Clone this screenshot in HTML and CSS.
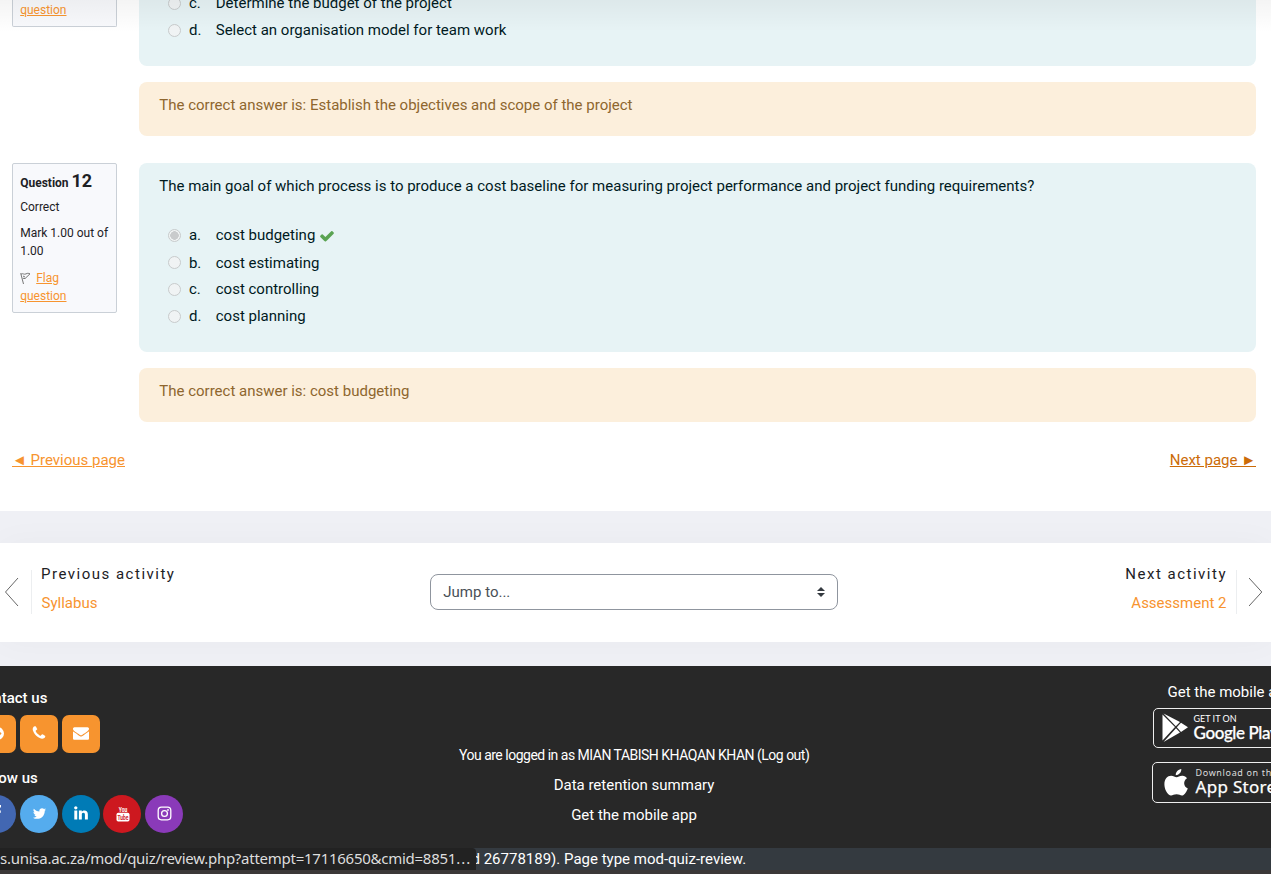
FILE: index.html
```html
<!DOCTYPE html>
<html lang="en">
<head>
<meta charset="utf-8">
<title>Quiz review</title>
<link rel="stylesheet" href="styles.css">
</head>
<body>
<main class="quiz">
  <section class="question question-first">
    <aside class="info"><a href="#">question</a></aside>
    <div class="content">
      <div class="formulation">
        <div class="option opt-c"><span class="radio"></span><span class="letter">c.</span><span>Determine the budget of the project</span></div>
        <div class="option"><span class="radio"></span><span class="letter">d.</span><span>Select an organisation model for team work</span></div>
      </div>
      <div class="outcome">The correct answer is: Establish the objectives and scope of the project</div>
    </div>
  </section>
  <section class="question">
    <aside class="info">
      <h3>Question <span>12</span></h3>
      <p>Correct</p>
      <p class="mark">Mark 1.00 out of 1.00</p>
      <div class="flag"><svg width="11" height="13" viewBox="0 0 11 13" fill="none" stroke="#777"><path d="M.7 1.2 3.5 12M1 2.2C3 .8 4 3 6 1.9S8.500 1.500 10 1.800L5 6.600 2.800 6.200M3 4l2 1"/></svg><a href="#">Flag<br>question</a></div>
    </aside>
    <div class="content">
      <div class="formulation full">
        <p class="prompt">The main goal of which process is to produce a cost baseline for measuring project performance and project funding requirements?</p>
        <div class="option first"><span class="radio checked"></span><span class="letter">a.</span><span>cost budgeting</span><svg class="tick" width="16" height="16" viewBox="0 0 1792 1792"><path fill="#5aa352" d="M1671 566q0 40-28 68l-724 724-136 136q-28 28-68 28t-68-28l-136-136-362-362q-28-28-28-68t28-68l136-136q28-28 68-28t68 28l294 295 656-657q28-28 68-28t68 28l136 136q28 28 28 68z"/></svg></div>
        <div class="option"><span class="radio"></span><span class="letter">b.</span><span>cost estimating</span></div>
        <div class="option"><span class="radio"></span><span class="letter">c.</span><span>cost controlling</span></div>
        <div class="option"><span class="radio"></span><span class="letter">d.</span><span>cost planning</span></div>
      </div>
      <div class="outcome">The correct answer is: cost budgeting</div>
    </div>
  </section>
  <nav class="pager"><a href="#">◄ Previous page</a><a class="hovered" href="#">Next page ►</a></nav>
</main>
<nav class="activities">
  <svg class="chevron" width="14" height="30" viewBox="0 0 14 30"><path d="M13 1 .5 15 13 29"/></svg>
  <div class="activity prev"><span class="label">Previous activity</span><a href="#">Syllabus</a></div>
  <div class="jump"><span>Jump to...</span><svg width="8" height="10" viewBox="0 0 4 5"><path fill="#343a40" d="M2 0 0 2h4zm0 5L0 3h4z"/></svg></div>
  <div class="activity next"><span class="label">Next activity</span><a href="#">Assessment 2</a></div>
  <svg class="chevron right" width="14" height="30" viewBox="0 0 14 30"><path d="M0 1l12.800 14L0 29"/></svg>
</nav>
<footer class="footer">
  <div class="social">
    <h4 class="contact">Contact us</h4>
    <div class="icons">
      <span class="tile"><svg width="15" height="15" viewBox="0 0 15 15"><circle cx="7.500" cy="7.500" r="6.500" fill="#fff"/><path d="M4 4l3-1 1 3-3 2zM9.500 7.500l1.200-1.500.8 1.500-1 1.500z" fill="#f7942f"/></svg></span>
      <span class="tile"><svg width="16" height="16" viewBox="0 0 1792 1792"><path fill="#fff" d="M1600 1240q0 27-10 70.500t-21 68.500q-21 50-122 106-94 51-186 51-27 0-52.500-3.500t-57.500-12.500-47.500-14.500-55.500-20.500-49-18q-98-35-175-83-128-79-264.500-215.500t-215.500-264.500q-48-77-83-175-3-9-18-49t-20.500-55.500-14.500-47.500-12.500-57.500-3.500-52.500q0-92 51-186 56-101 106-122 25-11 68.500-21t70.500-10q14 0 21 3 18 6 53 76 11 19 30 54t35 63.500 31 53.500q3 4 17.500 25t21.500 35.500 7 28.500q0 20-28.500 50t-62 55-62 53-28.500 46q0 9 5 22.500t8.500 20.500 14 24 11.500 19q76 137 174 235t235 174q2 1 19 11.500t24 14 20.500 8.500 22.500 5q18 0 46-28.500t53-62 55-62 50-28.500q14 0 28.500 7t35.500 21.500 25 17.500q25 15 53.500 31t63.500 35 54 30q70 35 76 53 3 7 3 21z"/></svg></span>
      <span class="tile mail"><svg width="16" height="16" viewBox="0 0 1792 1792"><path fill="#fff" d="M1792 710v794q0 66-47 113t-113 47h-1472q-66 0-113-47t-47-113v-794q44 49 101 87 362 246 497 345 57 42 92.500 65.500t94.500 48 110 24.500h2q51 0 110-24.500t94.500-48 92.500-65.500q170-123 498-345 57-39 100-87zm0-294q0 79-49 151t-122 123q-376 261-468 325-10 7-42.500 31t-54 38.500-52 32.500-57.500 27-50 9h-2q-23 0-50-9t-57.500-27-52-32.500-54-38.500-42.500-31q-91-64-262-182.500t-205-142.500q-62-42-117-115.500t-55-136.500q0-78 41.500-130t118.500-52h1472q65 0 112.500 47t47.500 113z"/></svg></span>
    </div>
    <h4 class="follow">Follow us</h4>
    <div class="icons">
      <span class="tile round fb"><svg width="16" height="16" viewBox="0 0 1792 1792"><path fill="#fff" d="M1343 12v264h-157q-86 0-116 36t-30 108v189h293l-39 296h-254v759h-306v-759h-255v-296h255v-218q0-186 104-288.500t277-102.500q147 0 228 12z"/></svg></span>
      <span class="tile round tw"><svg width="15" height="15" viewBox="0 0 1792 1792"><path fill="#fff" d="M1684 408q-67 98-162 167 1 14 1 42 0 130-38 259.500t-115.500 248.500-184.500 210.500-258 146-323 54.500q-271 0-496-145 35 4 78 4 225 0 401-138-105-2-188-64.500t-114-159.500q33 5 61 5 43 0 85-11-112-23-185.500-111.500t-73.500-205.500v-4q68 38 146 41-66-44-105-115t-39-154q0-88 44-163 121 149 294.500 238.500t371.500 99.500q-8-38-8-74 0-134 94.500-228.500t228.500-94.500q140 0 236 102 109-21 205-78-37 115-142 178 93-10 186-50z"/></svg></span>
      <span class="tile round li"><svg width="16" height="16" viewBox="0 0 1792 1792"><path fill="#fff" d="M477 625v991h-330v-991h330zm21-306q1 73-50.500 122t-135.500 49h-2q-82 0-132-49t-50-122q0-74 51.500-122.500t134.500-48.500 133 48.500 51 122.500zm1166 729v568h-329v-530q0-105-40.500-164.500t-126.500-59.500q-63 0-105.500 34.500t-63.500 85.500q-11 30-11 81v553h-329q2-399 2-647t-1-296l-1-48h329v144h-2q20-32 41-56t56.500-52 87-43.500 114.500-15.500q171 0 275 113.500t104 332.500z"/></svg></span>
      <span class="tile round yt"><svg width="14" height="17" viewBox="0 0 14 17"><text class="yt-top" x="7" y="6.800" text-anchor="middle" textLength="8.500" lengthAdjust="spacingAndGlyphs">You</text><rect x=".5" y="7.800" width="13" height="8.700" rx="1.700" fill="#fff"/><text class="yt-low" x="7" y="15" text-anchor="middle" textLength="11" lengthAdjust="spacingAndGlyphs">Tube</text></svg></span>
      <span class="tile round ig"><svg width="15" height="15" viewBox="0 0 15 15" fill="none" stroke="#fff" stroke-width="1.300"><rect x="1.200" y="1.200" width="12.600" height="12.600" rx="3.200"/><circle cx="7.500" cy="7.500" r="2.900"/><circle cx="11" cy="4" r=".3"/></svg></span>
    </div>
  </div>
  <div class="login">
    <p class="tight">You are logged in as MIAN TABISH KHAQAN KHAN (Log out)</p>
    <p>Data retention summary</p>
    <p>Get the mobile app</p>
  </div>
  <div class="stores">
    <p>Get the mobile app</p>
    <div class="store google">
      <svg width="26" height="30" viewBox="0 0 26 30"><path fill="#fff" d="M.5 1.500 13 14 .5 27.500zM1.500.6 18 9l-4.200 4.300zM1.500 29 14 15.300 18 19.500zM14.800 14.300 19 9.800l7 4.500-7 4.700z"/></svg>
      <div class="store-text"><small>GET IT ON</small><b>Google Play</b></div>
    </div>
    <div class="store apple">
      <svg width="24" height="27" viewBox="0 0 24 27"><path fill="#fff" d="M17.300 0c.3 3.300-2.500 6.100-5.500 6.200C11.500 3.100 14.300.4 17.300 0zM23 9.200c-4 2.500-3.700 8.300.8 10.200-1 2.600-3 6.500-5.400 7.100-2.200.2-3-1.200-5.800-1.200s-4 1.400-5.900 1.200C3 25.500.5 20 .4 15.500.3 10 3.500 6.800 7.100 6.800c2.300 0 3.900 1.400 5.500 1.400 1.400 0 3.300-1.600 6-1.400 1.800.1 3.400.9 4.400 2.400z"/></svg>
      <div class="store-text"><small>Download on the</small><b>App Store</b></div>
    </div>
  </div>
</footer>
<div class="pageinfo"><span>d 26778189). Page type mod-quiz-review.</span></div>
<div class="status">s.unisa.ac.za/mod/quiz/review.php?attempt=17116650&amp;cmid=8851<span class="dots">...</span></div>
</body>
</html>
```

FILE: styles.css
```css
* { box-sizing: border-box; }
body {
  margin: 0;
  width: 1271px;
  height: 874px;
  overflow: hidden;
  display: flex;
  flex-direction: column;
  position: relative;
  background: #eff0f5;
  font: 15px/22.500px Roboto, sans-serif;
  color: #1d2125;
}
body::before {
  content: "";
  position: absolute;
  inset: 0 0 auto;
  height: 32px;
  background: linear-gradient(rgba(0, 0, 0, .045), transparent);
}
p, h3, h4 { margin: 0; }
a { color: #f7942f; }
.quiz { height: 511px; flex: none; background: #fff; padding: 0 15px 0 12px; }
.question { display: grid; grid-template-columns: 105px 1fr; column-gap: 22px; margin-bottom: 27px; align-items: start; }
.question-first { height: 136px; }
.info { border: 1px solid #cad0d7; border-radius: 2px; padding: 7px 7px 7px 7.200px; height: 150px; font-size: 12px; line-height: 18px; background: #f8f9fc; }
.question-first .info { height: 27px; padding-top: 1px; border-top: 0; border-radius: 0 0 2px 2px; }
.info h3 { font-size: 12px; line-height: 20px; height: 20px; font-weight: 700; }
.info h3 span { font-size: 18px; }
.info p { margin-top: 7px; }
.info .mark { margin-top: 8px; }
.flag { margin-top: 9px; }
.flag svg { vertical-align: -3px; margin-right: 5px; }
.formulation { background: #e7f3f5; color: #001a1e; border-radius: 0 0 8px 8px; height: 76px; padding: 0 20.250px; }
.formulation.full { height: 189px; border-radius: 8px; padding-top: 12px; }
.option { display: flex; align-items: center; height: 26.800px; padding-left: 8.300px; }
.opt-c { margin-top: -10px; }
.option.first { margin-top: 24px; height: 28px; }
.radio { width: 13px; height: 13px; border: 1px solid #c8cbcc; border-radius: 50%; background: #f0f3f4; margin-right: 8.400px; }
.radio.checked { background: radial-gradient(circle, #c9cbcc 4px, #f1f4f4 4.500px); }
.letter { width: 26.800px; }
.tick { margin-left: 4px; }
.outcome { margin-top: 16px; height: 54px; background: #fcefdc; color: #8e662e; border-radius: 8px; padding: 12px 20.250px; }
.pager { display: flex; justify-content: space-between; }
.pager .hovered { color: #cb6b08; }
.activities {
  flex: none; height: 99px; margin-top: 32px; background: #fff; box-shadow: 0 0 32px rgba(0, 0, 30, .03);
  display: grid; grid-template-columns: 14px 389px 408px 1fr 14px; padding: 0 8px 2px 5px; align-items: center;
}
.chevron { fill: none; stroke: #666; stroke-width: 1; }
.activity { display: flex; flex-direction: column; height: 44px; line-height: 22px; }
.activity a { text-decoration: none; margin-top: 7px; }
.label { letter-spacing: 1.500px; margin-top: -7px; }
.prev { border-left: 1px solid #eceef0; margin-left: 12px; padding-left: 9px; }
.prev a { margin-left: .5px; }
.next { border-right: 1px solid #eceef0; margin-right: 12px; padding-right: 9px; text-align: right; }
.next a { margin-right: .5px; }
.jump { margin-left: 22px; width: 408px; height: 36px; border: 1px solid #8f959e; border-radius: 8px; display: flex; align-items: center; justify-content: space-between; padding: 0 12px 0 12.300px; color: #495057; }
.jump span { padding-top: 1px; }
.footer { flex: none; height: 182px; margin-top: 24px; background: #282828; color: #fff; display: grid; grid-template-columns: 459px 350px 1fr; overflow: hidden; }
h4 { font-size: 15px; line-height: 20px; font-weight: 500; width: 120px; }
.social { padding-top: 22px; margin-left: -26px; }
.contact { margin-left: 1px; }
.icons { display: flex; gap: 3.800px; margin: 7px 0 15px 4px; }
.tile { width: 38px; height: 38px; border-radius: 7px; background: #f7942f; display: flex; align-items: center; justify-content: center; padding-bottom: 2px; }
.mail { padding-left: 1px; }
.round { border-radius: 50%; }
.fb { background: #4267b2; }
.tw { background: #55acee; padding-left: 1.500px; }
.li { background: #007bb6; }
.yt { background: #cd181f; padding-left: 1px; }
.ig { background: #8a3ab9; padding-left: 1px; }
.yt-top, .yt-low { font: 700 8px Roboto, sans-serif; fill: #fff; }
.yt-low { fill: #cd181f; }
.login { padding-top: 78px; text-align: center; line-height: 22px; white-space: nowrap; }
.login p { height: 30px; }
.login .tight { font-size: 14px; letter-spacing: -.5px; text-align: left; }
.stores { padding-top: 15px; width: 180px; margin-left: 343px; white-space: nowrap; }
.stores p { margin-left: 15.500px; }
.store { width: 136px; height: 40px; border: 1px solid #eee; border-radius: 5px; display: flex; padding-left: 8px; align-items: center; margin: 4px 0 0 1px; }
.apple { margin: 14px 0 0; height: 41px; padding-left: 11px; }
.store-text { display: flex; flex-direction: column; margin-left: 5.500px; }
.apple .store-text { margin-left: 7.500px; }
.store small { font: 9px/10px Lato, sans-serif; }
.store b { font: 500 17px/18px Lato, sans-serif; letter-spacing: -.4px; -webkit-text-stroke: .25px #fff; }
.apple small { font-family: "Noto Sans", sans-serif; letter-spacing: .65px; color: #ddd; }
.apple b { font: 400 17px/18px "Noto Sans", sans-serif; letter-spacing: .3px; }
.pageinfo { flex: none; height: 26px; background: #343a40; color: #fff; padding-left: 471.500px; border-bottom: 4px solid #3b3838; line-height: 22px; }
.status { position: absolute; left: 0; top: 848px; width: 476px; height: 22px; background: #222; color: #ddd; border-top-right-radius: 4px; font: 15px/21px "Noto Sans", sans-serif; letter-spacing: -.26px; white-space: nowrap; overflow: hidden; }
.dots { letter-spacing: 1px; }
```
